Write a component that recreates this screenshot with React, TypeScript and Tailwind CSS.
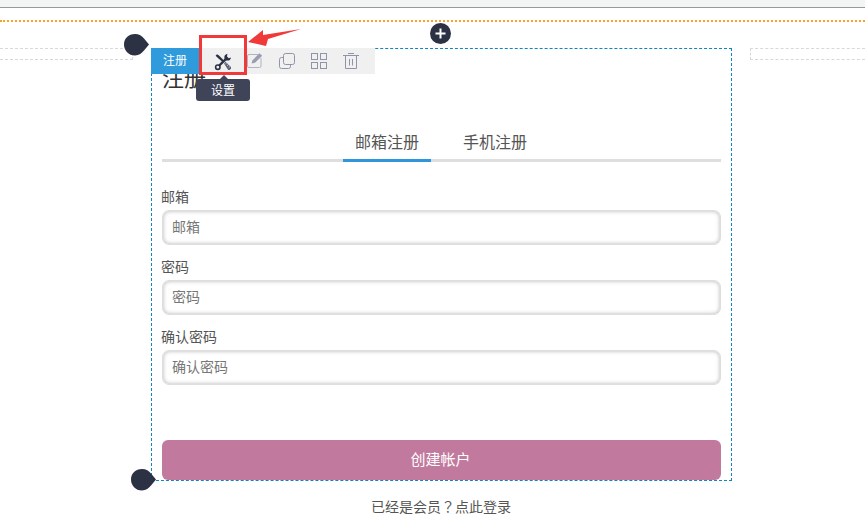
const font = { fontFamily: '"Liberation Sans", "Noto Sans CJK SC", sans-serif' };

function Field({ label }: { label: string }) {
  return (
    <div className="flex flex-col">
      <label className="h-[26px] pt-[3px] text-[14px] leading-[20px] text-[#555] -ml-[1px]">{label}</label>
      <div className="flex h-[35px] items-center rounded-[7px] border border-[#dedede] bg-white pl-[9px] text-[14px] text-[#777] shadow-[inset_0_0_4px_rgba(0,0,0,0.3)]">
        {label}
      </div>
    </div>
  );
}

function Pin({ className }: { className: string }) {
  return (
    <svg className={className} width="28" height="24" viewBox="0 0 28 24">
      <path d="M13 1 C17 1 20 3 22 5.5 L27 11.5 L22 17.5 C20 20 17 22.5 13 22.5 C6.5 22.5 2 17.5 2 11.5 C2 5.5 6.5 1 13 1 Z" fill="#2c3143" />
    </svg>
  );
}

const iconStroke = "#9094a8";

export default function App() {
  return (
    <div style={font} className="relative h-[523px] w-[865px] overflow-hidden bg-white">
      <div className="h-[8px] border-b border-[#999] bg-[#f3f4f4]" />
      <div className="mt-[12px] h-0 border-t-2 border-dotted border-[#f7a128]" />

      <div className="relative mt-[26px] flex">
        <div className="mr-[18px] h-[12px] w-[133px] shrink-0 border-y border-r border-dashed border-[#d8d8d8]" />
        <div className="relative h-[433px] w-[581px] shrink-0 border border-dashed border-[#0f86c0] px-[10px]">
          <div className="flex h-[45px] items-end">
            <h1 className="text-[22px] leading-[30px] text-[#333]">注册</h1>
          </div>
          <div className="mt-[38px] flex h-[30px] border-b-[3px] border-[#dedede] pl-[181px]">
            <div className="-mb-[3px] flex w-[88px] items-start justify-center border-b-[3px] border-[#2f96dc] text-[16px] leading-[22px] text-[#555]">邮箱注册</div>
            <div className="ml-[32px] text-[16px] leading-[22px] text-[#555]">手机注册</div>
          </div>
          <div className="mt-[22px] flex flex-col gap-[9px]">
            <Field label="邮箱" />
            <Field label="密码" />
            <Field label="确认密码" />
          </div>
          <button className="mt-[55px] flex h-[40px] w-full items-center justify-center rounded-[6px] bg-[#c17a9e] pr-[2px] text-[15px] text-white">创建帐户</button>
        </div>
        <div className="ml-[18px] h-[12px] flex-1 border-y border-l border-dashed border-[#d8d8d8]" />
      </div>

      <div className="mt-[16px] text-center text-[14px] leading-[20px] text-[#555]">
        <span className="ml-[17px]" style={{ fontFamily: '"Liberation Sans", "Noto Sans CJK TC", sans-serif' }}>已经是会员？点此登录</span>
      </div>

      {/* overlays */}
      <Pin className="absolute left-[122px] top-[33px]" />
      <Pin className="absolute left-[129px] top-[468px]" />

      <div className="absolute left-[430px] top-[23px] flex h-[21px] w-[21px] items-center justify-center rounded-full bg-[#2c3143]">
        <svg width="11" height="11" viewBox="0 0 11 11"><path d="M5.5 0.5v10M0.5 5.5h10" stroke="#fff" strokeWidth="2" /></svg>
      </div>

      <div className="absolute left-[151px] top-[48px] flex h-[26px] w-[224px] items-center bg-[#f0f0f0]">
        <div className="flex h-full w-[49px] items-center justify-center bg-[#2f9bdc] pr-[1px] text-[12px] text-white">注册</div>
        <div className="flex w-[39px] justify-center pl-[7px] pt-[1px]">
          <svg width="18" height="18" viewBox="0 0 18 18" fill="none">
            {/* screwdriver */}
            <path d="M1.6 2.8 L3 1.2 L5 2.4 L10.4 8 L9 9.4 L3.4 4.4 Z" fill="#2c3143" />
            <path d="M10 10.4 L11.6 8.8 L17 14 L17 15.6 L15.6 17 L14.2 17 Z" fill="#5d6277" />
            <path d="M11.4 11 L12.8 9.8 M13 12.8 L14.6 11.4 M14.8 14.6 L16.4 13.2" stroke="#f0f0f0" strokeWidth="0.7" />
            {/* wrench */}
            <path d="M12 5.8 L4.8 13" stroke="#2c3143" strokeWidth="2.4" />
            <circle cx="3.8" cy="14.2" r="2.2" stroke="#2c3143" strokeWidth="1.6" />
            <path d="M13.4 0.8 A4 4 0 0 0 10.5 5.6 L12.2 7.4 A4 4 0 0 0 17 4.4 L14.8 5.2 L13 3.6 Z" fill="#2c3143" />
          </svg>
        </div>
        <div className="flex w-[32px] justify-center">
          <svg width="18" height="18" viewBox="0 0 18 18" fill="none">
            <path d="M12 2.5H3a1.5 1.5 0 0 0-1.5 1.5V14a1.5 1.5 0 0 0 1.5 1.5H13.5A1.5 1.5 0 0 0 15 14V6" stroke="#b0b3c2" />
            <path d="M5.6 11.6 L6.4 8.4 L13.4 1.2 L16.2 3.8 L9 10.8 Z" fill="#9a9db0" />
          </svg>
        </div>
        <div className="flex w-[32px] justify-center">
          <svg width="18" height="18" viewBox="0 0 18 18" fill="none" stroke={iconStroke}>
            <rect x="5.5" y="1.5" width="11" height="11" rx="2" />
            <path d="M5.5 5.5H3.5a2 2 0 0 0-2 2v7a2 2 0 0 0 2 2H10.5a2 2 0 0 0 2-2V12.5" />
          </svg>
        </div>
        <div className="flex w-[32px] justify-center">
          <svg width="18" height="18" viewBox="0 0 18 18" fill="none" stroke={iconStroke}>
            <rect x="1.5" y="1.5" width="6" height="6" /><rect x="10.5" y="1.5" width="6" height="6" />
            <rect x="1.5" y="10.5" width="6" height="6" /><rect x="10.5" y="10.5" width="6" height="6" />
          </svg>
        </div>
        <div className="flex w-[32px] justify-center">
          <svg width="18" height="18" viewBox="0 0 18 18" fill="none" stroke={iconStroke}>
            <path d="M1 3.5h16M6 1.5h6M3.5 3.5V16.5h11V3.5M7.5 7v6.5M10.5 7v6.5" />
          </svg>
        </div>
      </div>

      <div className="absolute left-[199px] top-[35px] h-[40px] w-[48px] border-[3px] border-[#f03a3a]" />
      <svg className="absolute left-[248px] top-[28px]" width="54" height="20" viewBox="0 0 54 20">
        <path d="M0 14 L15 2 L15 7 L53 1 L20 11 L18 18 Z" fill="#f03a3a" />
      </svg>

      <div className="absolute left-[196px] top-[79px] flex h-[22px] w-[54px] items-center justify-center rounded-[3px] bg-[#3f4459] pt-[1px] text-[12px] text-white">
        <div className="absolute -top-[4px] left-[24px] h-0 w-0 border-x-[4px] border-b-[4px] border-x-transparent border-b-[#3f4459]" />
        设置
      </div>
    </div>
  );
}
